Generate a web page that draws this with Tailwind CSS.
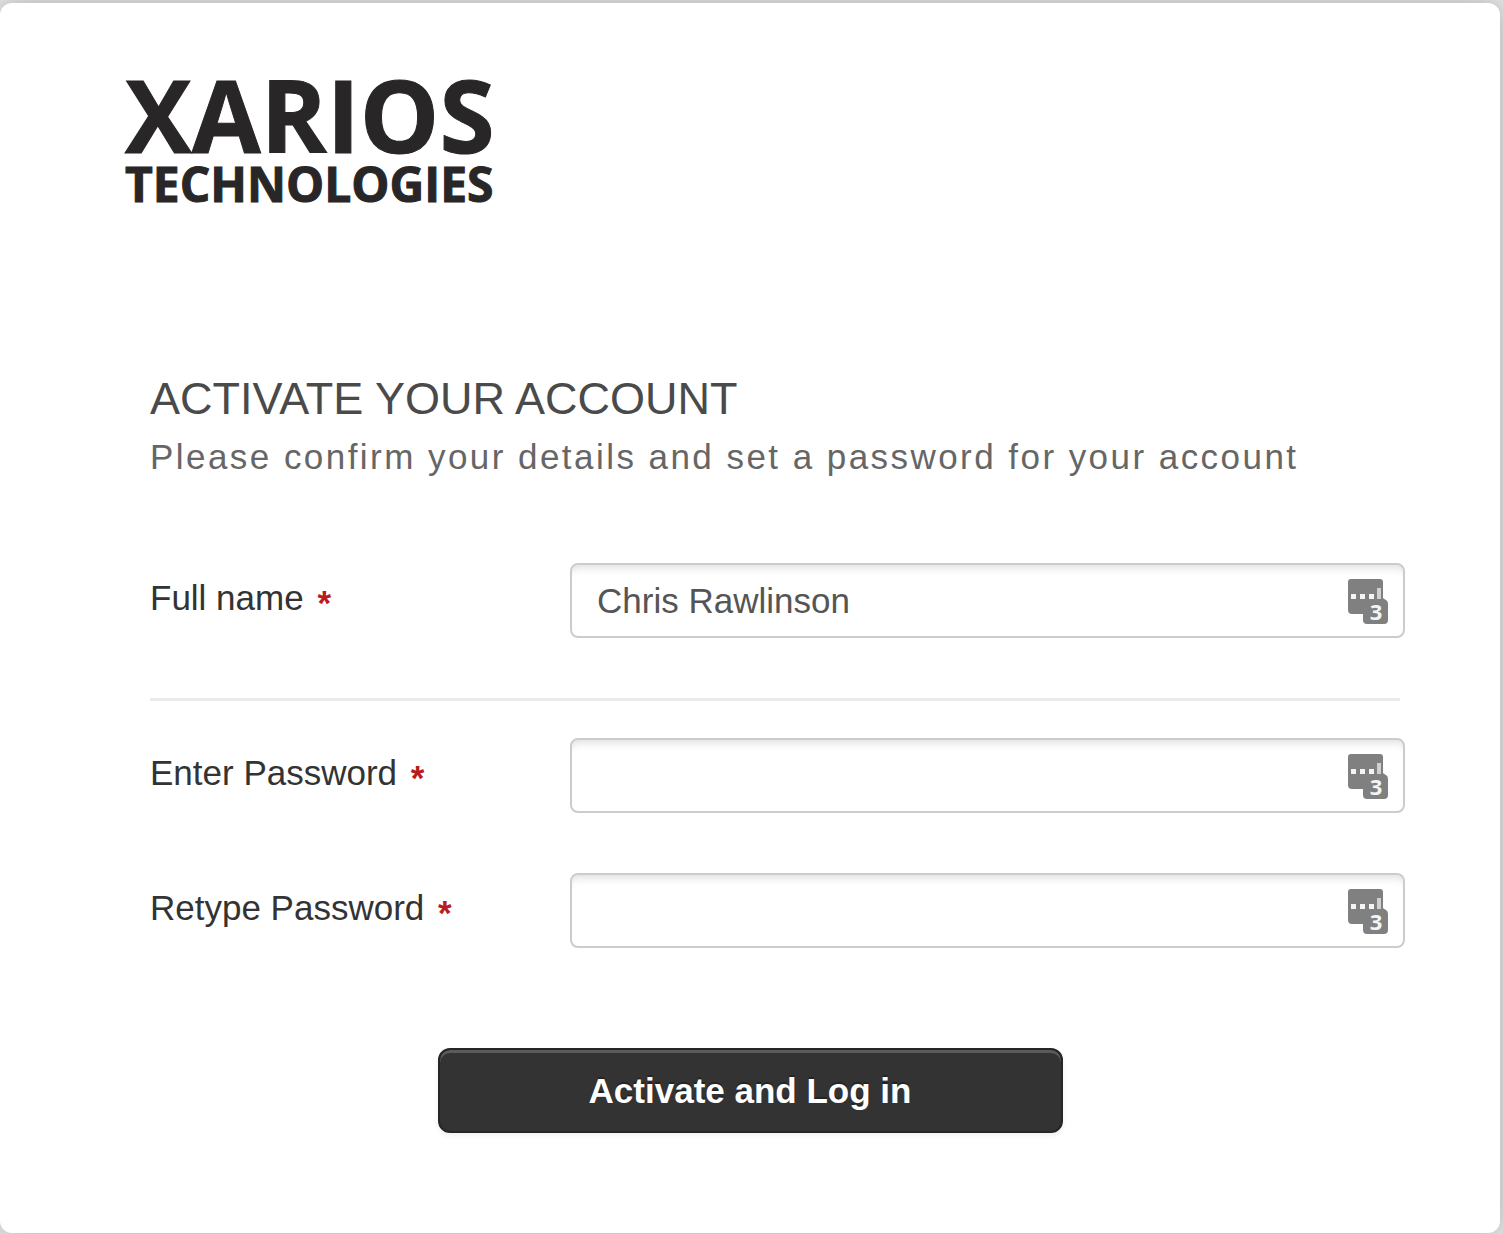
<!DOCTYPE html>
<html lang="en">
<head>
    <meta charset="UTF-8">
    <meta name="viewport" content="width=device-width, initial-scale=1.0">
    <title>Xarios Technologies - Activate your account</title>
    <script src="https://cdn.jsdelivr.net/npm/@tailwindcss/browser@4"></script>
</head>
<body class="min-h-screen overflow-x-hidden bg-[#e6e6e6] font-['Liberation_Sans',Arial,sans-serif] text-[35px] text-[#333]">
    <!-- Icon shared by the three fields -->
    <svg class="hidden" aria-hidden="true">
        <symbol id="fieldIcon" viewBox="0 0 40 45">
            <path fill="#808080" d="M3 0h29q3 0 3 3v16q1 1 3 2q2 1 2 4v16q0 4-4 4H19q-4 0-4-4v-6H4q-4 0-4-4V3q0-3 3-3z"/>
            <path fill="#f4f4f4" d="M3 15h5v5H3zM12 15h5v5h-5zM21 15h5v5h-5z"/>
            <path fill="#d0d0d0" d="M29 9h4v11h-4z"/>
            <text x="28" y="41" text-anchor="middle" fill="#f4f4f4" font-family="Open Sans, sans-serif" font-weight="700" font-size="22">3</text>
        </symbol>
    </svg>

    <div class="pt-[3px] pr-[3px] pb-px">
        <main class="rounded-xl bg-white pt-[75px] pb-[100px] shadow-[0_0_25px_rgba(0,0,0,0.25)]">
            <!-- Logo -->
            <div class="ml-[125px] font-['Open_Sans','Noto_Sans',sans-serif] font-bold text-[#282627] [-webkit-text-stroke:1px_#282627]">
                <div class="h-[80px] text-[100px] leading-[72px]">XARIOS</div>
                <div class="h-[50px] text-[48px] leading-[52px]">TECHNOLOGIES</div>
            </div>

            <form class="pt-[160px] pr-[95px] pl-[150px]">
                <h1 class="text-[45px] leading-[62px] text-[#4a4a4a]">ACTIVATE YOUR ACCOUNT</h1>
                <p class="text-[35px] leading-[53px] tracking-[0.07em] text-[#666]">Please confirm your details and set a password for your account</p>

                <!-- Full name -->
                <div class="mt-[80px] flex items-start">
                    <label for="fullName" class="w-[420px] shrink-0 leading-[70px]">Full name <span class="ml-1 inline-block pt-1 align-middle leading-[60px] font-bold text-[#b91c1c]">*</span></label>
                    <div class="relative grow">
                        <input id="fullName" type="text" value="Chris Rawlinson" class="block h-[75px] w-full rounded-lg border-2 border-[#ccc] bg-white px-[25px] text-[#555] shadow-[inset_0_10px_10px_-8px_rgba(0,0,0,0.15)] outline-none">
                        <svg class="absolute top-4 right-[17px] h-[45px] w-10"><use href="#fieldIcon"/></svg>
                    </div>
                </div>

                <hr class="mt-[60px] mr-[5px] mb-[37px] border-t-3 border-[#ebebeb]">

                <!-- Password -->
                <div class="flex items-start">
                    <label for="password" class="w-[420px] shrink-0 leading-[70px]">Enter Password <span class="ml-1 inline-block pt-1 align-middle leading-[60px] font-bold text-[#b91c1c]">*</span></label>
                    <div class="relative grow">
                        <input id="password" type="password" class="block h-[75px] w-full rounded-lg border-2 border-[#ccc] bg-white px-[25px] text-[#555] shadow-[inset_0_10px_10px_-8px_rgba(0,0,0,0.15)] outline-none">
                        <svg class="absolute top-4 right-[17px] h-[45px] w-10"><use href="#fieldIcon"/></svg>
                    </div>
                </div>

                <div class="mt-[60px] flex items-start">
                    <label for="retypePassword" class="w-[420px] shrink-0 leading-[70px]">Retype Password <span class="ml-1 inline-block pt-1 align-middle leading-[60px] font-bold text-[#b91c1c]">*</span></label>
                    <div class="relative grow">
                        <input id="retypePassword" type="password" class="block h-[75px] w-full rounded-lg border-2 border-[#ccc] bg-white px-[25px] text-[#555] shadow-[inset_0_10px_10px_-8px_rgba(0,0,0,0.15)] outline-none">
                        <svg class="absolute top-4 right-[17px] h-[45px] w-10"><use href="#fieldIcon"/></svg>
                    </div>
                </div>

                <div class="mt-[100px] mr-[55px] flex justify-center">
                    <button type="submit" class="h-[85px] w-full max-w-[625px] rounded-xl border-2 border-[#262626] bg-[#333] pt-px font-bold text-white shadow-[inset_0_3px_0_rgba(255,255,255,0.2),0_3px_5px_rgba(0,0,0,0.06)] text-shadow-[0_-2px_0_rgba(0,0,0,0.3)]">Activate and Log in</button>
                </div>
            </form>
        </main>
    </div>
</body>
</html>
